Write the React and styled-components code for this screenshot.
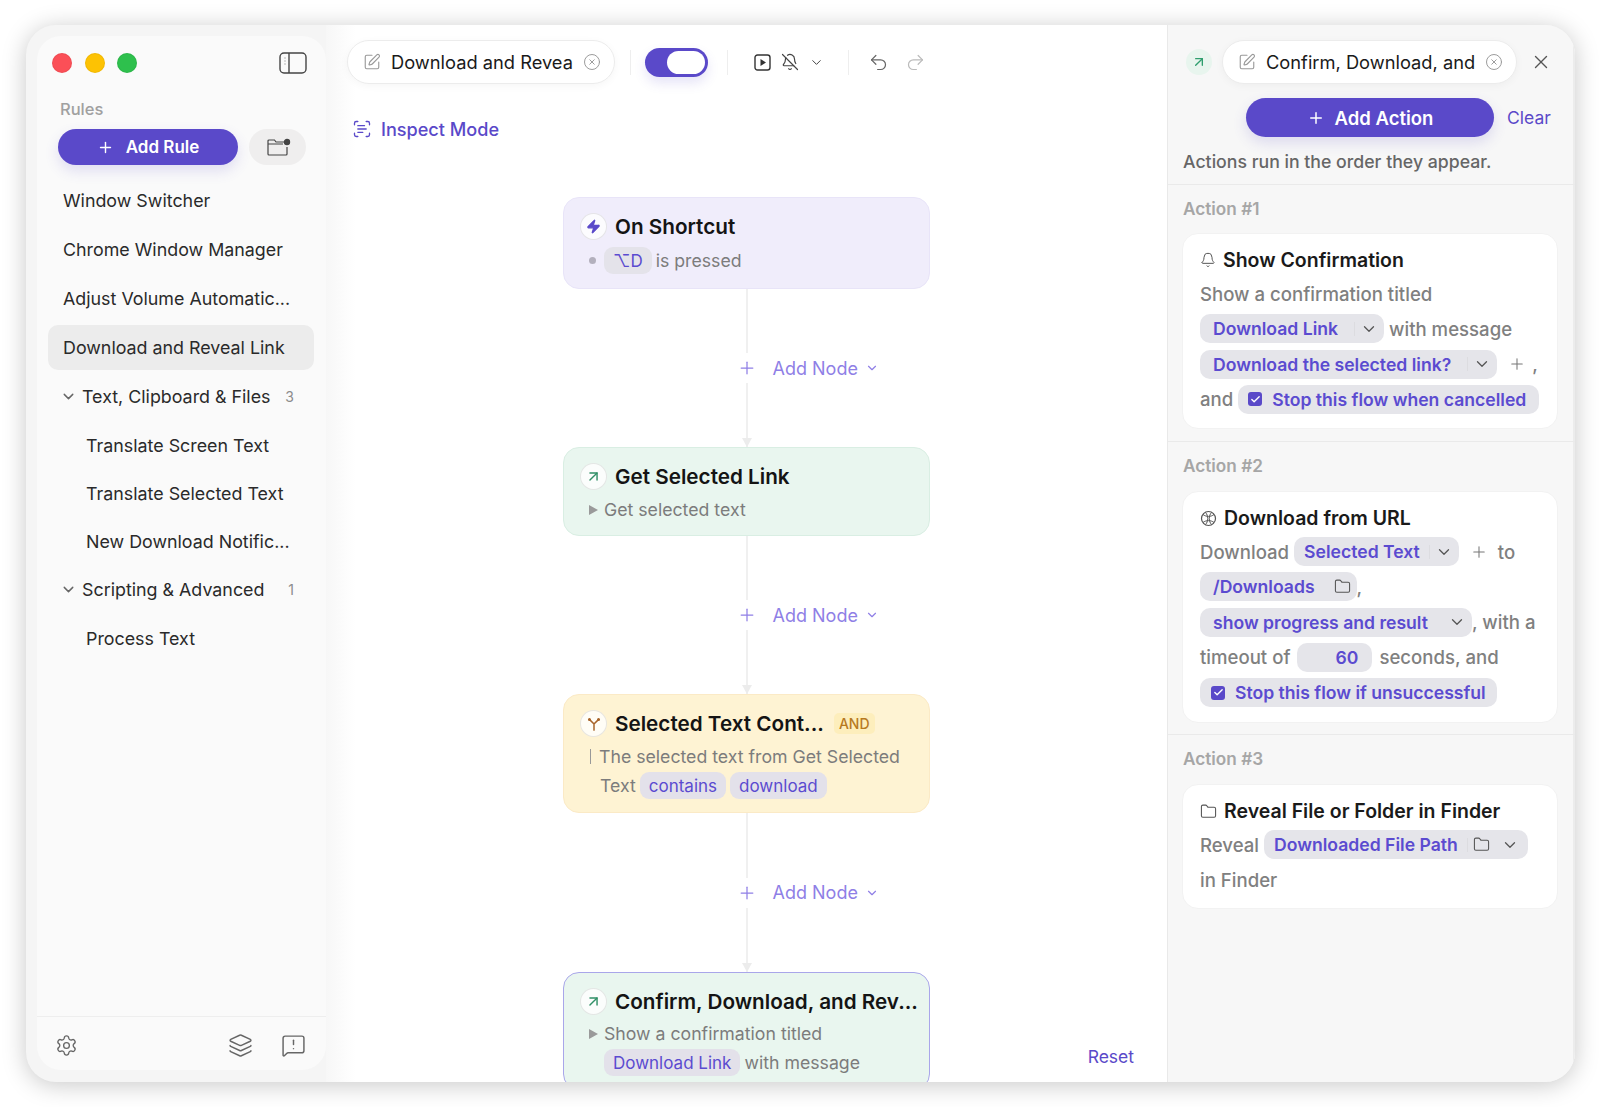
import React from "react";
import styled, { createGlobalStyle } from "styled-components";
import {
  SquarePen, CircleX, BellOff, ChevronDown, Undo2, Redo2, ScanText, Zap, ArrowUpRight,
  Bell, Folder, Settings, Layers, MessageSquareWarning, Plus, X, Check,
} from "lucide-react";

const Global = createGlobalStyle`
  html, body { margin: 0; padding: 0; background: #fff; }
  body { font-family: Inter, "Noto Sans", "DejaVu Sans", sans-serif; width: 1600px; height: 1107px; overflow: hidden; -webkit-font-smoothing: antialiased; }
  * { box-sizing: border-box; }
`;

const Page = styled.div`
  padding: 25px 25px 25px 26px;
  height: 1107px;
`;
const Window = styled.div`
  height: 1057px;
  border-radius: 30px;
  background: #f5f5f5;
  box-shadow: 0 3px 24px rgba(0,0,0,.22);
  display: flex;
  overflow: hidden;
`;
const SidebarWrap = styled.div`
  width: 300px;
  flex: none;
  padding: 11px 0 12px 11px;
`;
const Sidebar = styled.aside`
  height: 100%;
  background: #fafafa;
  border-radius: 24px;
  display: flex;
  flex-direction: column;
`;
const TrafficRow = styled.div`
  display: flex;
  align-items: center;
  justify-content: space-between;
  padding: 3px 19px 0 15px;
  height: 51px;
`;
const Lights = styled.div`display: flex; gap: 12.5px;`;
const Light = styled.span`
  width: 20px; height: 20px; border-radius: 50%;
  background: ${p => p.$c};
  box-shadow: inset 0 0 0 1px rgba(0,0,0,.05);
`;
const Section = styled.div`
  font-size: 16.5px; font-weight: 500; color: #a0a0a0;
  padding: 12px 0 0 23px; line-height: 20px; height: 42px;
`;
const RuleActions = styled.div`
  display: flex; gap: 11px; padding: 0 19px 0 21px;
`;
const PrimaryButton = styled.button`
  border: 0; color: #fff; background: #5a49c9; font: 600 ${p => p.$fs || 17}px Inter, sans-serif;
  height: ${p => p.$h || 36}px; width: ${p => p.$w}px; flex: none; border-radius: 20px;
  display: flex; align-items: center; justify-content: center; gap: ${p => p.$gap || 12}px; padding: 0;
  box-shadow: 0 6px 14px rgba(90,73,201,.16);
`;
const FolderButton = styled.button`
  border: 0; background: #efeeee; height: 36px; width: 57px; border-radius: 18px;
  display: flex; align-items: center; justify-content: center; padding: 0 0 0 2px; color: #555;
`;
const RuleList = styled.nav`
  display: flex; flex-direction: column; gap: 4px; padding: 13px 12px 0 11px; flex: 1;
`;
const RuleRow = styled.div`
  height: ${p => p.$child ? 44 : 45}px; display: flex; align-items: center; border-radius: 10px;
  padding-left: ${p => p.$child ? 38 : 15}px;
  background: ${p => p.$active ? "#ececec" : "transparent"};
  font-size: 17.85px; color: #2a2a2a; white-space: nowrap;
`;
const GroupRow = styled(RuleRow)`
  padding-left: 12px; gap: 5px; padding-right: 20px;
  svg { color: #666; flex: none; }
`;
const Count = styled.span`
  margin-left: auto; font-size: 14px; color: #8c8c8c;
`;
const SideFooter = styled.div`
  height: 54px; border-top: 1px solid #eeeeee; display: flex; align-items: center;
  padding: 4px 20px 0 18px; color: #666; flex: none;
`;
const FooterSpacer = styled.div`flex: 1;`;
const FooterIcons = styled.div`display: flex; gap: 28px; align-items: center;`;

const Main = styled.main`
  width: 841px; flex: none; position: relative; overflow: hidden; display: flex; flex-direction: column;
  background: linear-gradient(90deg, #f7f7f7 0, #ffffff 30px);
`;
const TopBar = styled.div`
  display: flex; align-items: center; padding: 14px 0 0 21px; height: 60px; flex: none; color: #444;
`;
const NamePill = styled.div`
  display: flex; align-items: center; height: ${p => p.$h || 44}px; width: ${p => p.$w}px; flex: none;
  background: #fff; border-radius: 22px; border: 1px solid #ececec;
  box-shadow: 0 2px 8px rgba(0,0,0,.04);
  padding: 0 13px 0 15px; font-size: 18.3px; color: #1a1a1a; white-space: nowrap;
  svg { flex: none; color: #999; }
`;
const NameText = styled.span`flex: 1; overflow: hidden; margin-left: 10px;`;
const Divider = styled.span`width: 1px; height: 25px; background: #eee; margin: 0 ${p => p.$r}px 0 ${p => p.$l}px; flex: none;`;
const Toggle = styled.div`
  width: 63px; height: 29px; border-radius: 15px; background: #5a49c9; position: relative; flex: none;
  box-shadow: 0 6px 12px rgba(90,73,201,.15);
`;
const Knob = styled.span`
  position: absolute; right: 3px; top: 3px; width: 38px; height: 23px; border-radius: 12px; background: #fff;
`;
const IconGroup = styled.div`display: flex; align-items: center; gap: ${p => p.$gap}px; flex: none;`;
const InspectRow = styled.div`
  display: flex; align-items: center; gap: 9px; padding: 0 0 0 26px; height: 22px; margin-top: 33px;
  color: #5a49c9; font-size: 18.1px; font-weight: 500; flex: none;
`;
const Flow = styled.div`
  display: flex; flex-direction: column; align-items: center; margin-top: 57px;
`;
const Node = styled.section`
  width: 367px; flex: none; border-radius: 16px; padding: 14px 10px 0 16px;
  height: ${p => p.$h}px;
  background: ${p => p.$bg};
  border: 1px solid ${p => p.$bd};
`;
const NodeHead = styled.div`display: flex; align-items: center; gap: 8px; height: 29px;`;
const NodeIcon = styled.span`
  width: 27px; height: 27px; border-radius: 50%; background: rgba(255,255,255,.8);
  border: 1px solid rgba(0,0,0,.09); display: flex; align-items: center; justify-content: center; flex: none;
  color: ${p => p.$c};
`;
const NodeTitle = styled.div`
  font-size: 20.7px; font-weight: 600; color: #141414; white-space: nowrap;
`;
const Tag = styled.span`
  font-size: 14px; color: #b7791f; background: #fdeebc; border-radius: 5px; padding: 2px 5px; margin-left: 2px; font-weight: 500;
`;
const NodeLine = styled.div`
  display: flex; align-items: center; gap: 4px; height: 29px; font-size: 17.7px; color: #7c7c7c; white-space: nowrap;
  margin-top: ${p => p.$mt || 0}px; padding-left: ${p => p.$pl || 0}px;
`;
const Bullet = styled.span`width: 7px; height: 7px; border-radius: 50%; background: #b3b0bd; margin: 0 4px 0 9px; flex: none;`;
const Triangle = styled.span`
  width: 0; height: 0; border-left: 9px solid #9a9a9a; border-top: 5px solid transparent; border-bottom: 5px solid transparent;
  margin: 0 2px 0 9px; flex: none;
`;
const Bar = styled.span`width: 1px; height: 15px; background: #999; margin: 0 4px 0 10px; flex: none;`;
const NodeChip = styled.span`
  display: inline-flex; align-items: center; height: 27px; padding: 0 9px; border-radius: 9px;
  background: ${p => p.$bg || "#e3e1ea"}; color: #5b4bd0; font-size: 17px;
`;
const Connector = styled.div`
  height: ${p => p.$h}px; width: 367px; display: flex; flex-direction: column; align-items: center; flex: none;
`;
const Wire = styled.div`
  width: 2px; flex: 1; background: #f0f0f0; position: relative;
  ${p => p.$arrow && `
    &::after {
      content: ""; position: absolute; left: -4px; bottom: 0; width: 0; height: 0;
      border-left: 5px solid transparent; border-right: 5px solid transparent; border-top: 9px solid #ececec;
    }
  `}
`;
const AddNode = styled.div`
  width: 100%; display: grid; grid-template-columns: 1fr 20px 1fr; align-items: center; height: 30px; color: #8f7fe6; font-size: 18px; flex: none;
`;
const AddNodeLabel = styled.div`display: flex; align-items: center; gap: 7px; padding-left: 16px;`;
const Reset = styled.a`
  position: absolute; right: 33px; bottom: 15px; color: #5a49c9; font-size: 17.5px; background: #fff; padding-left: 6px;
`;

const Panel = styled.aside`
  flex: 1; background: #f7f7f7; border-left: 1px solid #e9e9e9; display: flex; flex-direction: column; min-width: 0;
  box-shadow: inset -2px 0 0 #ececec;
`;
const PanelTop = styled.div`
  display: flex; align-items: center; padding: 13px 0 0 18px; height: 60px; flex: none;
`;
const PanelIcon = styled.span`
  width: 26px; height: 26px; border-radius: 50%; background: #e8f5ee; display: flex; align-items: center; justify-content: center; color: #2f9e6e; flex: none; margin-right: 10px;
`;
const CloseWrap = styled.span`margin-left: 13px; display: flex; color: #555;`;
const ActionRow = styled.div`display: flex; align-items: center; padding: 13px 0 0 78px; flex: none;`;
const ClearLink = styled.a`color: #5a49c9; font-size: 17.5px; margin-left: 13px;`;
const Hint = styled.div`font-size: 17.7px; font-weight: 500; color: #666; padding: 13px 0 0 15px; height: 48px; border-bottom: 1px solid #eaeaea; line-height: 24px; flex: none;`;
const ActionSection = styled.section`
  padding: 0 17px ${p => p.$pb}px 14px; border-bottom: ${p => p.$last ? "none" : "1px solid #eaeaea"}; flex: none;
`;
const ActionLabel = styled.div`font-size: 17.2px; font-weight: 600; color: #a6a6a6; height: ${p => p.$h || 48}px; padding: 14px 0 0 1px; line-height: 20px;`;
const ActionCard = styled.div`
  background: #fff; border-radius: 16px; padding: 12px 14px 0 17px; height: ${p => p.$h}px; border: 1px solid #f2f2f2;
`;
const ActionTitle = styled.div`
  display: flex; align-items: center; gap: 7px; font-size: 19.5px; font-weight: 600; color: #1a1a1a; height: 28px; white-space: nowrap;
  svg { flex: none; color: #555; }
`;
const ActionLine = styled.div`
  display: flex; align-items: center; gap: ${p => p.$gap ?? 5}px; height: 29px; margin-top: ${p => p.$first ? 5 : 6.3}px; font-size: 18.6px; font-weight: 500; color: #808080; white-space: nowrap;
`;
const Chip = styled.span`
  display: inline-flex; align-items: center; height: 29px; background: #e5e5ea; border-radius: 10px;
  padding: 0 ${p => p.$pr ?? 6}px 0 ${p => p.$pl ?? 13}px; color: #5b4bd0; font-size: 17.6px; font-weight: 600; width: ${p => p.$w ? p.$w + "px" : "auto"};
  justify-content: ${p => p.$end ? "flex-end" : "flex-start"};
  flex: none;
  svg { flex: none; color: #555; }
`;
const ChipSep = styled.span`width: 1px; height: 14px; background: #dcdce0; flex: none; margin-left: ${p => p.$l}px; margin-right: 5px;`;
const ChipGap = styled.span`width: ${p => p.$w}px; flex: none;`;
const AddMore = styled.span`display: inline-flex; margin: 0 ${p => p.$r}px 0 ${p => p.$l}px; color: #777;`;
const CheckBox = styled.span`
  width: 14px; height: 14px; border-radius: 3px; background: #5a49c9; color: #fff; display: inline-flex; align-items: center; justify-content: center; margin-right: 10px; flex: none;
  svg { color: #fff; }
`;

const PanelToggle = () => (
  <svg width="28" height="22" viewBox="0 0 28 22" fill="none" stroke="#444" strokeWidth="1.4">
    <rect x="1" y="1" width="26" height="20" rx="4" />
    <path d="M10 1v20" />
    <path d="M5.5 6h1M5.5 9h1M5.5 12h1" strokeWidth="1.2" stroke="#777" />
  </svg>
);
const FolderDot = () => (
  <svg width="24" height="18" viewBox="0 0 24 18" fill="none" stroke="#444" strokeWidth="1.2">
    <path d="M17 4H9L7.5 2H2a1 1 0 0 0-1 1v13a1 1 0 0 0 1 1h17a1 1 0 0 0 1-1V9" />
    <path d="M1 6h15" />
    <circle cx="20" cy="4" r="2.6" fill="#444" />
  </svg>
);
const PlayBox = () => (
  <svg width="17" height="17" viewBox="0 0 17 17" fill="none" stroke="#333" strokeWidth="1.4">
    <rect x="1" y="1" width="15" height="15" rx="2.5" />
    <path d="M6.5 5v7l5.5-3.5z" fill="#333" stroke="none" />
  </svg>
);
const SplitIcon = () => (
  <svg width="14" height="14" viewBox="0 0 16 16" fill="none" stroke="#a8642a" strokeWidth="1.7" strokeLinecap="round">
    <path d="M8 15V8M8 8L3 3M8 8l5-5" />
    <circle cx="2.8" cy="2.8" r=".9" fill="#a8642a" />
    <circle cx="13.2" cy="2.8" r=".9" fill="#a8642a" />
  </svg>
);
const GlobeGrid = () => (
  <svg width="17" height="17" viewBox="0 0 17 17" fill="none" stroke="#555" strokeWidth="1.2">
    <circle cx="8.5" cy="8.5" r="7" />
    <path d="M3 4.5C6 7 11 7 14 4.5M3 12.5C6 10 11 10 14 12.5M5.5 2.5c3 3 3 9 0 12M11.5 2.5c-3 3-3 9 0 12" strokeWidth="1" />
  </svg>
);
const ChipFolder = () => <Folder size={17} strokeWidth={1.5} />;
const Chev = () => <ChevronDown size={18} strokeWidth={1.7} />;

const Connect = ({ h }) => (
  <Connector $h={h}>
    <Wire />
    <AddNode>
      <span />
      <Plus size={20} strokeWidth={1.5} />
      <AddNodeLabel>Add Node<ChevronDown size={14} /></AddNodeLabel>
    </AddNode>
    <Wire $arrow />
  </Connector>
);

export default function App() {
  return (
    <>
      <Global />
      <Page>
        <Window>
          <SidebarWrap>
            <Sidebar>
              <TrafficRow>
                <Lights>
                  <Light $c="#fb4f57" />
                  <Light $c="#fdc203" />
                  <Light $c="#2ec04d" />
                </Lights>
                <PanelToggle />
              </TrafficRow>
              <Section>Rules</Section>
              <RuleActions>
                <PrimaryButton $w={180}><Plus size={17} />Add Rule</PrimaryButton>
                <FolderButton><FolderDot /></FolderButton>
              </RuleActions>
              <RuleList>
                <RuleRow>Window Switcher</RuleRow>
                <RuleRow>Chrome Window Manager</RuleRow>
                <RuleRow>Adjust Volume Automatic...</RuleRow>
                <RuleRow $active>Download and Reveal Link</RuleRow>
                <GroupRow><ChevronDown size={17} />Text, Clipboard &amp; Files<Count>3</Count></GroupRow>
                <RuleRow $child>Translate Screen Text</RuleRow>
                <RuleRow $child>Translate Selected Text</RuleRow>
                <RuleRow $child>New Download Notific...</RuleRow>
                <GroupRow><ChevronDown size={17} />Scripting &amp; Advanced<Count>1</Count></GroupRow>
                <RuleRow $child>Process Text</RuleRow>
              </RuleList>
              <SideFooter>
                <Settings size={23} strokeWidth={1.4} />
                <FooterSpacer />
                <FooterIcons>
                  <Layers size={25} strokeWidth={1.4} />
                  <MessageSquareWarning size={25} strokeWidth={1.4} />
                </FooterIcons>
              </SideFooter>
            </Sidebar>
          </SidebarWrap>

          <Main>
            <TopBar>
              <NamePill $w={268}>
                <SquarePen size={18} strokeWidth={1.5} />
                <NameText>Download and Revea</NameText>
                <CircleX size={18} strokeWidth={1.3} />
              </NamePill>
              <Divider $l={15} $r={14} />
              <Toggle><Knob /></Toggle>
              <Divider $l={19} $r={26} />
              <IconGroup $gap={10}>
                <PlayBox />
                <BellOff size={18} strokeWidth={1.6} />
                <ChevronDown size={15} strokeWidth={1.6} />
              </IconGroup>
              <Divider $l={24} $r={19} />
              <IconGroup $gap={16}>
                <Undo2 size={21} strokeWidth={1.4} color="#666" />
                <Redo2 size={21} strokeWidth={1.4} color="#bbb" />
              </IconGroup>
            </TopBar>
            <InspectRow><ScanText size={20} strokeWidth={1.6} />Inspect Mode</InspectRow>
            <Flow>
              <Node $h={92} $bg="#f0edfb" $bd="#e8e4f8">
                <NodeHead>
                  <NodeIcon $c="#5a49c9"><Zap size={15} fill="#5a49c9" /></NodeIcon>
                  <NodeTitle>On Shortcut</NodeTitle>
                </NodeHead>
                <NodeLine $mt={5}>
                  <Bullet /><NodeChip $bg="#e4e3ea">⌥D</NodeChip>is pressed
                </NodeLine>
              </Node>
              <Connect h={158} />
              <Node $h={89} $bg="#e9f6ef" $bd="#d9eee3">
                <NodeHead>
                  <NodeIcon $c="#2f8f66"><ArrowUpRight size={17} /></NodeIcon>
                  <NodeTitle>Get Selected Link</NodeTitle>
                </NodeHead>
                <NodeLine $mt={4}><Triangle />Get selected text</NodeLine>
              </Node>
              <Connect h={158} />
              <Node $h={119} $bg="#fef3d3" $bd="#fbeac6">
                <NodeHead>
                  <NodeIcon><SplitIcon /></NodeIcon>
                  <NodeTitle>Selected Text Cont...</NodeTitle>
                  <Tag>AND</Tag>
                </NodeHead>
                <NodeLine $mt={4}><Bar />The selected text from Get Selected</NodeLine>
                <NodeLine $pl={20}>Text<NodeChip>contains</NodeChip><NodeChip>download</NodeChip></NodeLine>
              </Node>
              <Connect h={159} />
              <Node $h={118} $bg="#e9f6ef" $bd="#a9a6ea">
                <NodeHead>
                  <NodeIcon $c="#2f8f66"><ArrowUpRight size={17} /></NodeIcon>
                  <NodeTitle>Confirm, Download, and Rev...</NodeTitle>
                </NodeHead>
                <NodeLine $mt={3}><Triangle />Show a confirmation titled</NodeLine>
                <NodeLine $pl={24}><NodeChip>Download Link</NodeChip>with message</NodeLine>
              </Node>
            </Flow>
            <Reset>Reset</Reset>
          </Main>

          <Panel>
            <PanelTop>
              <PanelIcon><ArrowUpRight size={16} /></PanelIcon>
              <NamePill $w={295}>
                <SquarePen size={18} strokeWidth={1.5} />
                <NameText>Confirm, Download, and</NameText>
                <CircleX size={18} strokeWidth={1.3} />
              </NamePill>
              <CloseWrap><X size={22} strokeWidth={1.5} /></CloseWrap>
            </PanelTop>
            <ActionRow>
              <PrimaryButton $w={248} $h={39} $fs={18.5} $gap={10}><Plus size={18} />Add Action</PrimaryButton>
              <ClearLink>Clear</ClearLink>
            </ActionRow>
            <Hint>Actions run in the order they appear.</Hint>

            <ActionSection $pb={12}>
              <ActionLabel>Action #1</ActionLabel>
              <ActionCard $h={196}>
                <ActionTitle><Bell size={16} strokeWidth={1.5} />Show Confirmation</ActionTitle>
                <ActionLine $first>Show a confirmation titled</ActionLine>
                <ActionLine>
                  <Chip>Download Link<ChipSep $l={16} /><Chev /></Chip>with message
                </ActionLine>
                <ActionLine>
                  <Chip>Download the selected link?<ChipSep $l={16} /><Chev /></Chip>
                  <AddMore $l={6} $r={1}><Plus size={18} strokeWidth={1.4} /></AddMore>,
                </ActionLine>
                <ActionLine>
                  and<Chip $pl={10} $pr={13}><CheckBox><Check size={11} strokeWidth={3} /></CheckBox>Stop this flow when cancelled</Chip>
                </ActionLine>
              </ActionCard>
            </ActionSection>

            <ActionSection $pb={11}>
              <ActionLabel $h={49}>Action #2</ActionLabel>
              <ActionCard $h={232}>
                <ActionTitle><GlobeGrid />Download from URL</ActionTitle>
                <ActionLine $first>
                  Download<Chip $pl={10}>Selected Text<ChipSep $l={9} /><Chev /></Chip>
                  <AddMore $l={6} $r={5}><Plus size={18} strokeWidth={1.4} /></AddMore>to
                </ActionLine>
                <ActionLine $gap={0}>
                  <Chip>/Downloads<ChipGap $w={19} /><ChipFolder /></Chip>,
                </ActionLine>
                <ActionLine $gap={0}>
                  <Chip>show progress and result<ChipGap $w={20} /><Chev /></Chip>, with a
                </ActionLine>
                <ActionLine $gap={7}>
                  timeout of<Chip $w={75} $end $pr={14}>60</Chip>seconds, and
                </ActionLine>
                <ActionLine>
                  <Chip $pl={11} $pr={11}><CheckBox><Check size={11} strokeWidth={3} /></CheckBox>Stop this flow if unsuccessful</Chip>
                </ActionLine>
              </ActionCard>
            </ActionSection>

            <ActionSection $last $pb={13}>
              <ActionLabel $h={49}>Action #3</ActionLabel>
              <ActionCard $h={125}>
                <ActionTitle><Folder size={17} strokeWidth={1.5} />Reveal File or Folder in Finder</ActionTitle>
                <ActionLine $first>
                  Reveal<Chip $pl={10} $pr={9}>Downloaded File Path<ChipSep $l={9} /><ChipFolder /><ChipGap $w={11} /><Chev /></Chip>
                </ActionLine>
                <ActionLine>in Finder</ActionLine>
              </ActionCard>
            </ActionSection>
          </Panel>
        </Window>
      </Page>
    </>
  );
}
